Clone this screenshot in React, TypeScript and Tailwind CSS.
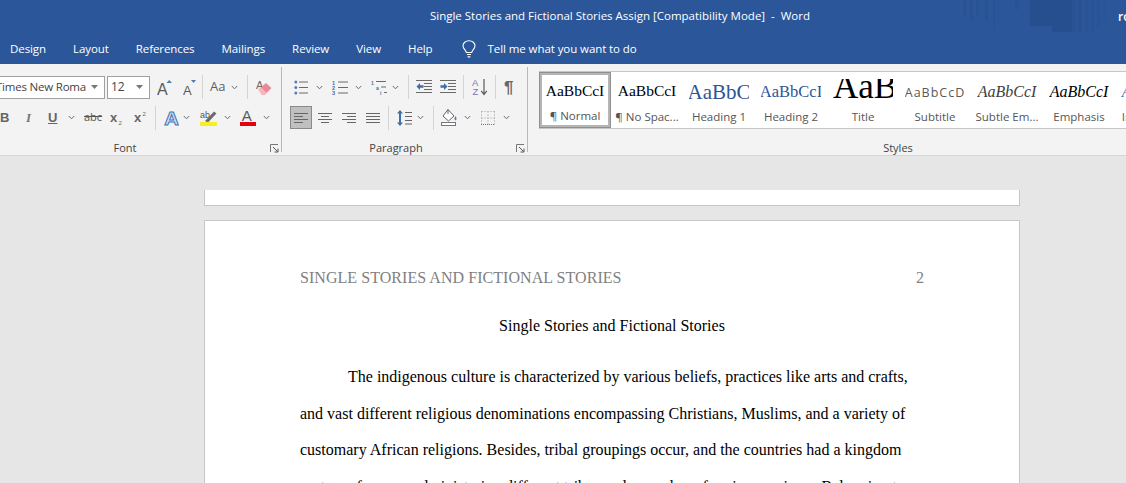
const UI_FONT = { fontFamily: '"Open Sans", "Noto Sans", sans-serif' }

function Chev({ className = '' }: { className?: string }) {
  return (
    <svg width="7" height="5" viewBox="0 0 7 5" className={`shrink-0 ${className}`}>
      <path d="M0.8 1 L3.5 3.8 L6.2 1" fill="none" stroke="#6b6b6b" strokeWidth="1" />
    </svg>
  )
}

function Sep({ className = '' }: { className?: string }) {
  return <div className={`w-px h-[24px] bg-[#d4d4d4] shrink-0 ${className}`} />
}

function Launcher() {
  return (
    <svg width="9" height="9" viewBox="0 0 9 9">
      <path d="M0.5 8 V0.5 H8" fill="none" stroke="#777" />
      <path d="M3 3 L7.5 7.5 M4.5 8 H8 V4.5" fill="none" stroke="#555" />
    </svg>
  )
}

function Lines({ x = 0, w = 14, rows = [2, 7, 12], color = '#6a6a6a' }: { x?: number; w?: number; rows?: number[]; color?: string }) {
  return (
    <>
      {rows.map((y) => (
        <path key={y} d={`M${x} ${y + 0.5} H${x + w}`} stroke={color} />
      ))}
    </>
  )
}

function Bullets({ className = '' }: { className?: string }) {
  return (
    <svg width="14" height="15" viewBox="0 0 14 15" className={`shrink-0 ${className}`}>
      <circle cx="1.8" cy="2" r="1.5" fill="#5b7fae" />
      <circle cx="1.8" cy="7.5" r="1.5" fill="#5b7fae" />
      <circle cx="1.8" cy="13" r="1.5" fill="#5b7fae" />
      <Lines x={5} w={9} rows={[1.5, 7, 12.5]} />
    </svg>
  )
}

function Numbered({ className = '' }: { className?: string }) {
  return (
    <svg width="16" height="15" viewBox="0 0 16 15" className={`shrink-0 ${className}`}>
      <g fontSize="5.5" fontFamily="Liberation Sans, sans-serif" fill="#3f6ea8" fontWeight="700">
        <text x="0" y="5">1</text>
        <text x="0" y="10">2</text>
        <text x="0" y="15">3</text>
      </g>
      <Lines x={6} w={10} rows={[1.5, 7, 12.5]} />
    </svg>
  )
}

function Multilevel({ className = '' }: { className?: string }) {
  return (
    <svg width="17" height="15" viewBox="0 0 17 15" className={`shrink-0 ${className}`}>
      <g fontSize="5" fontFamily="Liberation Sans, sans-serif" fill="#3f6ea8" fontWeight="700">
        <text x="0" y="4.5">1</text>
        <text x="5" y="9.5">a</text>
        <text x="9" y="15">i</text>
      </g>
      <path d="M5 1.5 H15 M10 7 H15 M13 12.5 H16" stroke="#6a6a6a" />
    </svg>
  )
}

function Indent({ dir, className = '' }: { dir: 'in' | 'out'; className?: string }) {
  return (
    <svg width="16" height="14" viewBox="0 0 16 14" className={`shrink-0 ${className}`}>
      <path d="M0 0.5 H16 M8 3.5 H16 M8 6.5 H16 M8 9.5 H16 M0 12.5 H16" stroke="#6a6a6a" />
      {dir === 'out' ? (
        <path d="M0.5 6.5 L4 3 V5.2 H7.5 V7.8 H4 V10 Z" fill="#3f6ea8" />
      ) : (
        <path d="M7.5 6.5 L4 3 V5.2 H0.5 V7.8 H4 V10 Z" fill="#3f6ea8" />
      )}
    </svg>
  )
}

function Sort({ className = '' }: { className?: string }) {
  return (
    <svg width="16" height="18" viewBox="0 0 16 18" className={`shrink-0 ${className}`}>
      <g fontSize="9.5" fontFamily="Liberation Sans, sans-serif" fill="#7b73b5">
        <text x="0" y="8">A</text>
        <text x="0.5" y="17">Z</text>
      </g>
      <path d="M12 1 V16 M9.2 12.8 L12 16.5 L14.8 12.8" fill="none" stroke="#5c5c5c" strokeWidth="1.2" />
    </svg>
  )
}

function Align({ kind, className = '' }: { kind: 'left' | 'center' | 'right' | 'justify'; className?: string }) {
  const rows = {
    left: 'M0 0.5 H14 M0 3.5 H9 M0 6.5 H14 M0 9.5 H9',
    center: 'M0 0.5 H14 M3 3.5 H11 M0 6.5 H14 M3 9.5 H11',
    right: 'M0 0.5 H14 M5 3.5 H14 M0 6.5 H14 M5 9.5 H14',
    justify: 'M0 0.5 H14 M0 3.5 H14 M0 6.5 H14 M0 9.5 H14',
  }
  return (
    <svg width="14" height="10" viewBox="0 0 14 10" className={`shrink-0 ${className}`}>
      <path d={rows[kind]} stroke="#666" />
    </svg>
  )
}

function LineSpacing({ className = '' }: { className?: string }) {
  return (
    <svg width="15" height="18" viewBox="0 0 15 18" className={`shrink-0 ${className}`}>
      <path d="M3 1 L6 4.5 H4 V13.5 H6 L3 17 L0 13.5 H2 V4.5 H0 Z" fill="#3f6ea8" />
      <path d="M8 3.5 H15 M8 7.5 H15 M8 11.5 H15 M8 15 H15" stroke="#666" />
    </svg>
  )
}

function Shading({ className = '' }: { className?: string }) {
  return (
    <svg width="17" height="17" viewBox="0 0 17 17" className={`shrink-0 ${className}`}>
      <path d="M7 0.5 L13 7 L7.5 12 L2 7 Z" fill="#fff" stroke="#666" />
      <path d="M7 0.5 V5" stroke="#666" />
      <path d="M14.5 7 Q16.5 10 14.5 11.5 Q12.5 10 14.5 7 Z" fill="#4f7fb5" />
      <rect x="0.5" y="13.5" width="14" height="3" fill="#fff" stroke="#777" />
    </svg>
  )
}

function Borders({ className = '' }: { className?: string }) {
  return (
    <svg width="14" height="14" viewBox="0 0 14 14" className={`shrink-0 ${className}`}>
      <path d="M0.5 0.5 H14 M0.5 7 H14 M0.5 0.5 V14 M7 0.5 V14 M13.5 0.5 V14" stroke="#999" strokeDasharray="1 2" fill="none" />
      <path d="M0 13.5 H14" stroke="#777" strokeDasharray="1 1" />
    </svg>
  )
}

function GrowFont({ className = '' }: { className?: string }) {
  return (
    <svg width="15" height="18" viewBox="0 0 15 18" className={`shrink-0 ${className}`}>
      <text x="0" y="17" fontSize="16" fontFamily="Liberation Sans, sans-serif" fill="#5a5a5a">A</text>
      <path d="M9.5 5 L12.2 2 L15 5 Z" fill="#4a7db5" />
    </svg>
  )
}

function ShrinkFont({ className = '' }: { className?: string }) {
  return (
    <svg width="13" height="18" viewBox="0 0 13 18" className={`shrink-0 ${className}`}>
      <text x="0" y="17" fontSize="13" fontFamily="Liberation Sans, sans-serif" fill="#5a5a5a">A</text>
      <path d="M8 2 H13 L10.5 5 Z" fill="#4a7db5" />
    </svg>
  )
}

function Eraser({ className = '' }: { className?: string }) {
  return (
    <svg width="16" height="17" viewBox="0 0 16 17" className={`shrink-0 ${className}`}>
      <text x="0" y="10" fontSize="11" fontFamily="Liberation Sans, sans-serif" fill="#6a6a6a">A</text>
      <path d="M2.5 10.5 L10 4 L15.5 9 L8.5 16 L6 16 Z" fill="#e98a99" />
      <path d="M2.5 10.5 L5 8.3 L10.5 13.8 L8.5 16 L6 16 Z" fill="#f3b9c2" />
    </svg>
  )
}

function TextEffect({ className = '' }: { className?: string }) {
  return (
    <svg width="15" height="18" viewBox="0 0 15 18" className={`shrink-0 ${className}`}>
      <text x="0.2" y="15.5" fontSize="18" fontWeight="700" fontFamily="Liberation Sans, sans-serif" fill="#cfe0f2" stroke="#3f74b5" strokeWidth="0.9" textLength="14.6" lengthAdjust="spacingAndGlyphs">A</text>
    </svg>
  )
}

function Highlight({ className = '' }: { className?: string }) {
  return (
    <svg width="17" height="16" viewBox="0 0 17 16" className={`shrink-0 ${className}`}>
      <text x="0" y="7.5" fontSize="9" fontFamily="Liberation Sans, sans-serif" fill="#555">ab</text>
      <path d="M5 11 L14 1.5 L16.5 3.5 L8 12.5 Z" fill="#6c6c6c" />
      <rect x="0" y="12" width="17" height="4" rx="1" fill="#f7f01e" />
    </svg>
  )
}

function FontColor({ className = '' }: { className?: string }) {
  return (
    <svg width="16" height="17" viewBox="0 0 16 17" className={`shrink-0 ${className}`}>
      <text x="1.8" y="12" fontSize="15" fontFamily="Liberation Sans, sans-serif" fill="#5a5a5a">A</text>
      <rect x="0" y="13" width="16" height="4" fill="#e3000f" />
    </svg>
  )
}

function Sub({ sup = false, className = '' }: { sup?: boolean; className?: string }) {
  return (
    <svg width="13" height="14" viewBox="0 0 13 14" className={`shrink-0 ${className}`}>
      <text x="0" y="11" fontSize="13" fontWeight="700" fontFamily="Liberation Sans, sans-serif" fill="#666">x</text>
      <text x="8.5" y={sup ? 5 : 13.5} fontSize="6" fontFamily="Liberation Sans, sans-serif" fill="#666">2</text>
    </svg>
  )
}

function Bulb() {
  return (
    <svg width="14" height="18" viewBox="0 0 14 18" className="shrink-0">
      <path d="M4.3 12.5 C4 10 1 9 1 5.8 C1 3 3.6 0.8 7 0.8 C10.4 0.8 13 3 13 5.8 C13 9 10 10 9.7 12.5 Z" fill="none" stroke="#fff" strokeWidth="1.1" />
      <path d="M5 14.5 H9 M5.6 16.8 H8.4" stroke="#fff" strokeWidth="1.2" />
    </svg>
  )
}

function Stripes() {
  const bars = [
    [13, 3, 15, 0.18], [20, 3, 20, 0.2], [26, 3, 16, 0.14], [35, 3, 20, 0.18], [43, 2, 30, 0.16],
    [65, 3, 10, 0.16], [80, 22, 26, 0.3], [102, 20, 36, 0.32], [122, 4, 33, 0.16], [128, 4, 36, 0.18],
    [135, 3, 34, 0.14], [141, 3, 31, 0.14], [147, 3, 27, 0.12], [153, 3, 20, 0.1],
  ]
  return (
    <svg width="176" height="40" viewBox="0 0 176 40" className="absolute top-0 right-0">
      {bars.map(([x, w, h, o]) => (
        <rect key={x} x={x} y="0" width={w} height={h} fill="#1c3f78" opacity={o} />
      ))}
    </svg>
  )
}

function GroupLabel({ label, reserve }: { label: string; reserve: string }) {
  return (
    <div className="mt-auto flex items-center h-[14px] text-[11px] text-[#444]">
      <span className="flex-1 text-center">{label}</span>
      <div className={`flex justify-end pr-[2px] ${reserve}`}>
        <Launcher />
      </div>
    </div>
  )
}

function FontGroup() {
  return (
    <div className="w-[281px] shrink-0 flex flex-col pt-[11px] overflow-hidden">
      <div className="flex items-center h-[24px]">
        <div className="-ml-[10px] w-[115px] h-[23px] shrink-0 bg-white border border-[#a0a0a0] flex items-center justify-end pr-[6px] overflow-hidden">
          <span className="text-[11.5px] tracking-[-0.2px] text-[#444] whitespace-nowrap mr-[5px]">Times New Roma</span>
          <svg width="7" height="4" viewBox="0 0 7 4"><path d="M0 0 H7 L3.5 4 Z" fill="#777" /></svg>
        </div>
        <div className="ml-[2px] w-[43px] h-[23px] shrink-0 bg-white border border-[#a0a0a0] flex items-center justify-between pl-[3px] pr-[6px]">
          <span className="text-[12px] text-[#444]">12</span>
          <svg width="7" height="4" viewBox="0 0 7 4"><path d="M0 0 H7 L3.5 4 Z" fill="#777" /></svg>
        </div>
        <GrowFont className="ml-[7px]" />
        <ShrinkFont className="ml-[11px]" />
        <Sep className="ml-[6px]" />
        <span className="ml-[7px] w-[16px] text-[13px] text-[#5f5f5f]">Aa</span>
        <Chev className="ml-[5px]" />
        <Sep className="ml-[9px]" />
        <Eraser className="ml-[8px]" />
      </div>
      <div className="flex items-center h-[25px] mt-[6px]">
        <span className="w-[8px] text-[13px] font-bold text-[#666] shrink-0" style={{ fontFamily: 'Liberation Sans, sans-serif' }}>B</span>
        <span className="ml-[18px] w-[7px] text-[13px] italic font-bold text-[#777] shrink-0" style={{ fontFamily: 'Liberation Serif, serif' }}>I</span>
        <span className="ml-[15px] w-[10px] text-[13px] font-bold text-[#666] underline shrink-0" style={{ fontFamily: 'Liberation Sans, sans-serif' }}>U</span>
        <Chev className="ml-[10px]" />
        <span className="ml-[9px] w-[17px] text-[11px] text-[#555] line-through shrink-0">abc</span>
        <Sub className="ml-[9px]" />
        <Sub sup className="ml-[11px]" />
        <Sep className="ml-[8px]" />
        <TextEffect className="ml-[8px]" />
        <Chev className="ml-[4px]" />
        <Highlight className="ml-[10px]" />
        <Chev className="ml-[7px]" />
        <FontColor className="ml-[9px]" />
        <Chev className="ml-[7px]" />
      </div>
      <GroupLabel label="Font" reserve="w-[31px]" />
    </div>
  )
}

function ParagraphGroup() {
  return (
    <div className="w-[244px] shrink-0 flex flex-col pt-[11px] overflow-hidden">
      <div className="flex items-center h-[24px]">
        <Bullets className="ml-[11px]" />
        <Chev className="ml-[8px]" />
        <Numbered className="ml-[9px]" />
        <Chev className="ml-[7px]" />
        <Multilevel className="ml-[9px]" />
        <Chev className="ml-[4px]" />
        <Sep className="ml-[9px]" />
        <Indent dir="out" className="ml-[7px]" />
        <Indent dir="in" className="ml-[8px]" />
        <Sep className="ml-[7px]" />
        <Sort className="ml-[8px]" />
        <Sep className="ml-[7px]" />
        <span className="ml-[8px] w-[12px] text-[17px] font-bold text-[#666] leading-none" style={{ fontFamily: 'Liberation Sans, sans-serif' }}>¶</span>
      </div>
      <div className="flex items-center h-[25px] mt-[6px]">
        <div className="ml-[7px] w-[22px] h-[23px] shrink-0 bg-[#c0c0c0] border border-[#8a8a8a] flex items-center justify-center">
          <Align kind="left" />
        </div>
        <Align kind="center" className="ml-[6px]" />
        <Align kind="right" className="ml-[10px]" />
        <Align kind="justify" className="ml-[10px]" />
        <Sep className="ml-[8px]" />
        <LineSpacing className="ml-[8px]" />
        <Chev className="ml-[5px]" />
        <Sep className="ml-[9px]" />
        <Shading className="ml-[7px]" />
        <Chev className="ml-[6px]" />
        <Borders className="ml-[10px]" />
        <Chev className="ml-[8px]" />
      </div>
      <GroupLabel label="Paragraph" reserve="w-[18px]" />
    </div>
  )
}

const STYLES = [
  { name: '¶ Normal', sample: 'AaBbCcI', cls: 'text-[15.5px] text-black', serif: true, selected: true },
  { name: '¶ No Spac...', sample: 'AaBbCcI', cls: 'text-[15.5px] text-black', serif: true },
  { name: 'Heading 1', sample: 'AaBbC', cls: 'text-[21px] text-[#2f5496] mt-[4px]', serif: true },
  { name: 'Heading 2', sample: 'AaBbCcI', cls: 'text-[16.5px] text-[#2f5496] mt-[4px]', serif: true },
  { name: 'Title', sample: 'AaB', cls: 'text-[35px] text-black -mb-[5px]', serif: true, clipped: true },
  { name: 'Subtitle', sample: 'AaBbCcD', cls: 'text-[12.5px] tracking-[1px] text-[#5a5a5a] mt-[5px]', serif: false },
  { name: 'Subtle Em...', sample: 'AaBbCcI', cls: 'text-[16px] italic text-[#404040] mt-[2px]', serif: true },
  { name: 'Emphasis', sample: 'AaBbCcI', cls: 'text-[16px] italic text-black mt-[2px]', serif: true },
  { name: 'Intense E...', sample: 'AaBbCcI', cls: 'text-[16px] italic text-[#4472c4] mt-[2px]', serif: true },
]

function StyleItem({ item }: { item: (typeof STYLES)[number] }) {
  let sampleBox = 'h-[32px] pt-[5px] items-center justify-center'
  if (item.selected) sampleBox = 'h-[29px] pt-[3px] items-center justify-center'
  if (item.clipped) sampleBox = 'h-[20px] mt-[7px] mb-[5px] items-end justify-start'
  return (
    <div className={`w-[72px] h-[56px] shrink-0 flex flex-col items-center overflow-hidden ${item.selected ? 'border-[3px] border-[#b5b5b5] outline outline-1 outline-[#8f8f8f] -outline-offset-1' : ''}`}>
      <div className={`w-[60px] flex overflow-hidden whitespace-nowrap leading-none shrink-0 ${sampleBox}`}>
        <span className={item.cls} style={item.serif ? { fontFamily: '"Liberation Serif", serif' } : UI_FONT}>{item.sample}</span>
      </div>
      <span className={`text-[11.5px] leading-none text-[#555] whitespace-nowrap ${item.selected ? 'mt-[6px]' : 'mt-[7px]'}`}>{item.name}</span>
    </div>
  )
}

function StylesGroup() {
  return (
    <div className="w-[740px] shrink-0 flex flex-col">
      <div className="ml-[11px] mt-[7px] h-[58px] bg-white border-y border-[#c6c6c6] flex items-start">
        {STYLES.map((item) => (
          <StyleItem key={item.name} item={item} />
        ))}
      </div>
      <div className="mt-auto h-[14px] flex items-center justify-center text-[11px] text-[#444]">Styles</div>
    </div>
  )
}

const BODY_LINES = [
  <span key="1" className="pl-[48px]">The indigenous culture is characterized by various beliefs, practices like arts and crafts,</span>,
  <span key="2">and vast different religious denominations encompassing Christians, Muslims, and a variety of</span>,
  <span key="3">customary African religions. Besides, tribal groupings occur, and the countries had a kingdom</span>,
  <span key="4">system of power, administering different tribes and a number of various regimes. Belonging to</span>,
]

export default function App() {
  return (
    <div className="w-[1126px] h-[483px] overflow-hidden flex flex-col bg-[#e6e6e6]" style={UI_FONT}>
      <div className="relative h-[32px] shrink-0 bg-[#2b579a] flex items-center justify-center text-white text-[11.5px] overflow-hidden">
        <Stripes />
        <span className="relative ml-[114px] whitespace-pre">Single Stories and Fictional Stories Assign [Compatibility Mode]  -  Word</span>
        <span className="absolute left-[1118px] top-[8px] text-[12px] font-semibold">ro</span>
      </div>
      <div className="h-[32px] shrink-0 bg-[#2b579a] flex items-center pl-[10px] pt-[2px] text-white text-[11.5px] tracking-[-0.08px] gap-[27px]">
        <span>Design</span>
        <span>Layout</span>
        <span>References</span>
        <span>Mailings</span>
        <span>Review</span>
        <span>View</span>
        <span>Help</span>
        <div className="flex items-center gap-[12px] ml-[2px]">
          <Bulb />
          <span>Tell me what you want to do</span>
        </div>
      </div>
      <div className="h-[92px] shrink-0 bg-[#f3f3f3] border-b border-[#d6d6d6] flex overflow-hidden">
        <FontGroup />
        <div className="w-px my-[3px] bg-[#b8b8b8] shrink-0 mr-[1px]" />
        <ParagraphGroup />
        <div className="w-px my-[3px] bg-[#b8b8b8] shrink-0" />
        <StylesGroup />
      </div>
      <div className="flex-1 min-h-0 pt-[34px] pl-[204px]">
        <div className="w-[816px] h-[16px] bg-white border-x border-b border-[#c6c6c6]" />
        <div className="w-[816px] mt-[14px] h-[300px] bg-white border border-[#c6c6c6] pl-[95px] pr-[95px] pt-[45px] text-[16px] text-black" style={{ fontFamily: '"Liberation Serif", serif' }}>
          <div className="flex justify-between h-[24px] leading-[24px] text-[#7f7f7f]">
            <span className="tracking-[0.05px]">SINGLE STORIES AND FICTIONAL STORIES</span>
            <span>2</span>
          </div>
          <div className="mt-[24px] h-[24px] leading-[24px] text-center">Single Stories and Fictional Stories</div>
          <div className="mt-[21px]">
            {BODY_LINES.map((line) => (
              <div key={line.key} className="h-[36.5px] leading-[36.5px] whitespace-nowrap">{line}</div>
            ))}
          </div>
        </div>
      </div>
    </div>
  )
}
